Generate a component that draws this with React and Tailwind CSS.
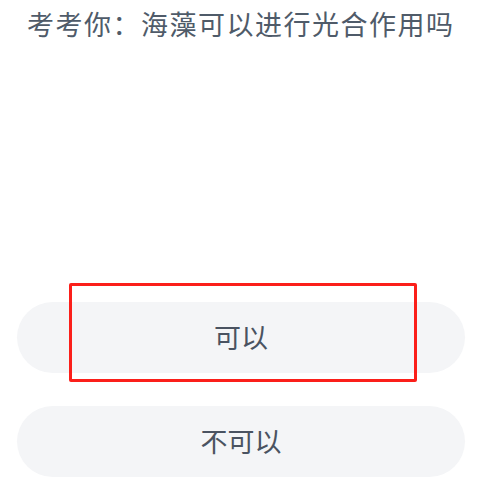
export default function App() {
  const font = { fontFamily: '"Noto Sans CJK SC", "Noto Sans", sans-serif' };
  return (
    <div className="w-[478px] h-[484px] bg-white overflow-hidden" style={font}>
      <div className="pt-[6px] pl-[27px] text-[27px] leading-[36px] tracking-[1.5px] text-[#4f5b69] whitespace-nowrap">
        考考你：海藻可以进行光合作用吗
      </div>
      <div className="mt-[260px] pl-[17px] pr-[13px] flex flex-col gap-[33px]">
        <div className="relative">
          <div className="h-[71px] rounded-full bg-[#f4f5f7] flex items-center justify-center text-[27px] text-[#4a5361]">
            可以
          </div>
          <div className="absolute left-[52px] top-[-19px] w-[348px] h-[99px] border-[3px] border-[#fb1f1a] rounded-[2px]" />
        </div>
        <div className="h-[71px] rounded-full bg-[#f4f5f7] flex items-center justify-center text-[27px] text-[#4a5361]">
          不可以
        </div>
      </div>
    </div>
  );
}
